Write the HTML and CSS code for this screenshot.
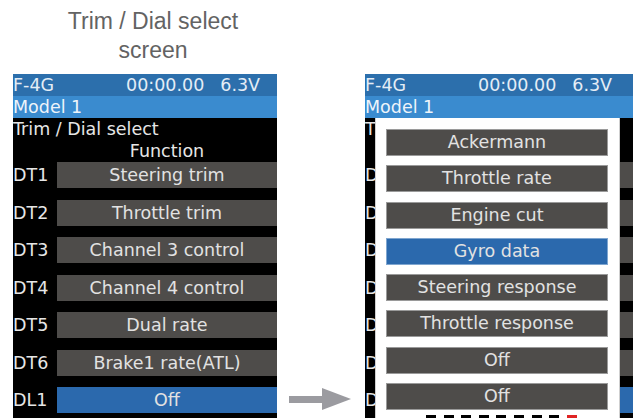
FILE: index.html
```html
<!DOCTYPE html>
<html>
<head>
<meta charset="utf-8">
<link rel="stylesheet" href="styles.css">
</head>
<body>
<div class="stage">
  <div class="col-left">
    <div class="caption">Trim / Dial select<br>screen</div>
    <div class="screen">
      <div class="hdr"><span class="model-id">F-4G</span><span class="time">00:00.00</span><span class="volt">6.3V</span></div>
      <div class="model">Model 1</div>
      <div class="title">Trim / Dial select</div>
      <div class="func-head">Function</div>
      <div class="rows">
        <span class="lbl">DT1</span><span class="bar">Steering trim</span>
        <span class="lbl">DT2</span><span class="bar">Throttle trim</span>
        <span class="lbl">DT3</span><span class="bar">Channel 3 control</span>
        <span class="lbl">DT4</span><span class="bar">Channel 4 control</span>
        <span class="lbl">DT5</span><span class="bar">Dual rate</span>
        <span class="lbl">DT6</span><span class="bar">Brake1 rate(ATL)</span>
        <span class="lbl">DL1</span><span class="bar sel">Off</span>
      </div>
    </div>
  </div>
  <div class="col-mid">
    <svg class="arrow" width="62" height="22" viewBox="0 0 62 22">
      <rect x="0" y="8" width="34" height="7" fill="#9b9ba0"/>
      <polygon points="33,0 62,11 33,22" fill="#9b9ba0"/>
    </svg>
  </div>
  <div class="col-right">
    <div class="screen wide">
      <div class="hdr"><span class="model-id">F-4G</span><span class="time">00:00.00</span><span class="volt">6.3V</span></div>
      <div class="model">Model 1</div>
      <div class="title clip">T</div>
      <div class="func-head"></div>
      <div class="rows">
        <span class="lbl clip">D</span><span class="bar"></span>
        <span class="lbl clip">D</span><span class="bar"></span>
        <span class="lbl clip">D</span><span class="bar"></span>
        <span class="lbl clip">D</span><span class="bar"></span>
        <span class="lbl clip">D</span><span class="bar"></span>
        <span class="lbl clip">D</span><span class="bar"></span>
        <span class="lbl clip">D</span><span class="bar sel"></span>
      </div>
      <div class="popup">
        <div class="plist">
          <div class="pbar">Ackermann</div>
          <div class="pbar">Throttle rate</div>
          <div class="pbar">Engine cut</div>
          <div class="pbar psel">Gyro data</div>
          <div class="pbar">Steering response</div>
          <div class="pbar">Throttle response</div>
          <div class="pbar">Off</div>
          <div class="pbar">Off</div>
        </div>
        <div class="dashes">
          <i></i><i></i><i></i><i></i><i></i><i></i><i></i><i></i><i class="red"></i>
        </div>
      </div>
    </div>
  </div>
</div>
</body>
</html>
```

FILE: styles.css
```css
html, body {
  margin: 0;
  padding: 0;
  background: #ffffff;
  overflow: hidden;
}

.stage {
  display: flex;
  align-items: flex-start;
  padding-left: 13px;
  height: 418px;
}

.col-left {
  width: 264px;
  flex: none;
}

.caption {
  font-family: "Liberation Sans", Arial, sans-serif;
  font-size: 23px;
  line-height: 29px;
  color: #636363;
  text-align: center;
  padding-left: 16px;
  padding-top: 7px;
  height: 58px;
  margin-bottom: 9px;
}

.col-mid {
  width: 88px;
  flex: none;
  padding-top: 388px;
}

.arrow {
  display: block;
  margin-left: 12px;
}

.col-right {
  flex: none;
  padding-top: 74px;
}

.screen {
  position: relative;
  width: 264px;
  height: 344px;
  background: #000000;
  overflow: hidden;
  font-family: "DejaVu Sans", Verdana, sans-serif;
  font-size: 17.5px;
  line-height: 22px;
  color: #e6e6e6;
}

.screen.wide {
  width: 268px;
}

.hdr {
  display: flex;
  height: 22px;
  background: #2c6fac;
  color: #e4edf6;
}

.model-id {
  width: 113px;
}

.volt {
  margin-left: 16px;
}

.model {
  height: 22px;
  background: #3a8bcf;
  color: #eef4fa;
}

.title {
  height: 22px;
}

.clip {
  width: 10px;
  overflow: hidden;
}

.func-head {
  height: 22px;
  padding-left: 44px;
  width: 220px;
  text-align: center;
}

.rows {
  display: grid;
  grid-template-columns: 44px 1fr;
  row-gap: 11.5px;
}

.lbl {
  line-height: 26px;
  height: 26px;
}

.bar {
  height: 26px;
  line-height: 26px;
  background: #4e4c4a;
  text-align: center;
  color: #e2e2e2;
}

.bar.sel {
  background: #2b69ad;
}

.popup {
  position: absolute;
  left: 10px;
  top: 44px;
  width: 245px;
  bottom: 0;
  background: #ffffff;
  box-sizing: border-box;
  border-left: 1px solid #cfcfcf;
  border-right: 1px solid #cfcfcf;
}

.plist {
  display: flex;
  flex-direction: column;
  gap: 9.3px;
  padding: 11px 0 0 10px;
}

.pbar {
  box-sizing: border-box;
  width: 222px;
  height: 27px;
  line-height: 25px;
  border: 1px solid #9a9a9a;
  background: #4e4c4a;
  color: #e2e2e2;
  text-align: center;
}

.pbar.psel {
  background: #2b69ad;
  border-color: #7fa6d0;
}

.dashes {
  display: flex;
  gap: 7.6px;
  padding-left: 50px;
  margin-top: 5px;
}

.dashes i {
  display: block;
  width: 10px;
  height: 8px;
  background: #000000;
}

.dashes i.red {
  background: #e02424;
}
```
